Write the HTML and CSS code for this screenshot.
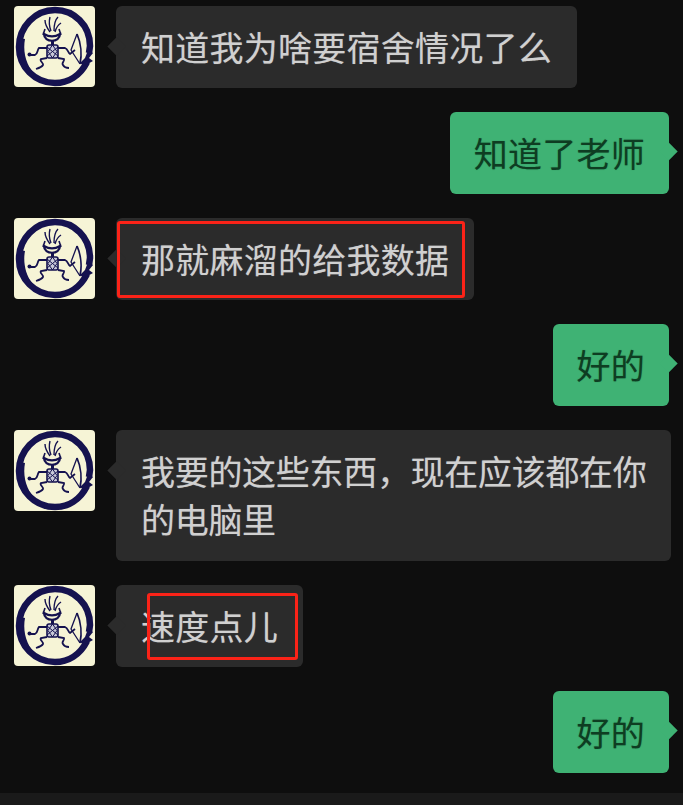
FILE: index.html
```html
<!DOCTYPE html>
<html lang="zh-CN">
<head>
    <meta charset="UTF-8">
    <meta name="viewport" content="width=device-width, initial-scale=1.0">
    <title>聊天记录</title>
    <link rel="stylesheet" href="styles.css">
</head>
<body>
    <svg class="defs" width="0" height="0" aria-hidden="true">
        <symbol id="avatar-logo" viewBox="0 0 81 81">
            <rect width="81" height="81" rx="4" fill="#f6f4d6"/>
            <!-- ring -->
            <path d="M73 56 C66 70 54 77 41 77 C21 77 5 61 5 41 C5 21 21 4 41 4 C60 4 76 19 76 40 L75 47" fill="none" stroke="#15124f" stroke-width="6.500"/>
            <path d="M6 32 C2 44 5 58 14 68 L18 65 C11 56 9 43 11 33 Z" fill="#15124f"/>
            <path d="M74 44 L79 47 L75 52 L79 55 L70 60 L66 57 L71 52 Z" fill="#15124f"/>
            <!-- feathers -->
            <path d="M36 26 C33 22 31 18 31 14 M37 25 C35 20 35 15 36 11 M40 25 C40 19 41 14 44 11 M41 26 C42 22 44 19 47 17" fill="none" stroke="#15124f" stroke-width="1.400"/>
            <!-- head -->
            <path d="M30 28 C30 37 46 37 46 28 C41 31 35 31 30 28 Z" fill="#f6f4d6" stroke="#15124f" stroke-width="2.200"/>
            <path d="M31 23 L29 29 M45 23 L47 29" stroke="#15124f" stroke-width="1.600"/>
            <rect x="37" y="35" width="3" height="5" fill="#15124f"/>
            <!-- body -->
            <rect x="33" y="39" width="11" height="13" rx="2" fill="#c8c9d8" stroke="#15124f" stroke-width="1.600"/>
            <path d="M33 41 L44 50 M44 41 L33 50 M38.500 39 L34 45.500 L38.500 52 L43 45.500 Z" fill="none" stroke="#15124f" stroke-width="1"/>
            <!-- arms -->
            <path d="M33 42 L25 42 C23 44 24 48 21 49 L15 49" fill="none" stroke="#15124f" stroke-width="1.800"/>
            <circle cx="15.500" cy="48.500" r="2" fill="#15124f"/>
            <path d="M44 42 L51 42 C54 43 54 47 56 48 L61 44" fill="none" stroke="#15124f" stroke-width="1.800"/>
            <!-- legs -->
            <path d="M33 52 L27 53 C25 55 30 57 29 59 C28 61 25 62 22 63" fill="none" stroke="#15124f" stroke-width="1.800"/>
            <path d="M44 52 L50 53 C51 55 47 57 49 59 C50 61 52 62 55 62" fill="none" stroke="#15124f" stroke-width="1.800"/>
            <!-- bow -->
            <path d="M63 28 L57 44 L66 58" fill="none" stroke="#15124f" stroke-width="1.300"/>
            <path d="M63 28 C67 37 68 49 66 58" fill="none" stroke="#15124f" stroke-width="1.800"/>
        </symbol>
    </svg>

    <main class="chat">
        <div class="row">
            <svg class="avatar"><use href="#avatar-logo"/></svg>
            <div class="bubble">知道我为啥要宿舍情况了么</div>
        </div>
        <div class="row me">
            <div class="bubble">知道了老师</div>
        </div>
        <div class="row">
            <svg class="avatar"><use href="#avatar-logo"/></svg>
            <div class="bubble">那就麻溜的给我数据<span class="mark mark-full"></span></div>
        </div>
        <div class="row me">
            <div class="bubble">好的</div>
        </div>
        <div class="row">
            <svg class="avatar"><use href="#avatar-logo"/></svg>
            <div class="bubble long">我要的这些东西，现在应该都在你的电脑里</div>
        </div>
        <div class="row">
            <svg class="avatar"><use href="#avatar-logo"/></svg>
            <div class="bubble">速度点儿<span class="mark mark-part"></span></div>
        </div>
        <div class="row me">
            <div class="bubble">好的</div>
        </div>
    </main>
    <div class="bottom-bar"></div>
</body>
</html>
```

FILE: styles.css
```css
/* Global Styles */
html, body {
    height: 100%;
}

body {
    margin: 0;
    background-color: #0e0e0e;
    font-family: "Noto Sans CJK SC", "Liberation Sans", sans-serif;
    display: flex;
    flex-direction: column;
    overflow: hidden;
}

.defs {
    position: absolute;
}

.chat {
    flex: 1;
    display: flex;
    flex-direction: column;
    gap: 24px;
    padding: 6px 14px 0;
}

.row {
    display: flex;
    align-items: flex-start;
    gap: 21px;
}

    .row.me {
        justify-content: flex-end;
    }

.avatar {
    width: 81px;
    height: 81px;
    flex-shrink: 0;
}

.bubble {
    position: relative;
    background-color: #2b2b2b;
    color: #d0d0d0;
    font-size: 34px;
    letter-spacing: 0.25px;
    line-height: 48px;
    padding: 17px 25px;
    border-radius: 6px;
    text-shadow: 0 0 1px rgba(208, 208, 208, 0.45);
}

    .bubble::before {
        content: "";
        position: absolute;
        top: 34px;
        left: -6px;
        width: 13px;
        height: 13px;
        background-color: inherit;
        transform: rotate(45deg);
    }

    .bubble.long {
        flex-shrink: 0;
        width: 506px;
        letter-spacing: -0.3px;
        padding-right: 24px;
        padding-bottom: 18px;
    }

.me .bubble {
    background-color: #3fb274;
    color: #0e3d22;
    padding: 17px 24px;
    text-shadow: 0 0 1px rgba(14, 61, 34, 0.45);
}

    .me .bubble::before {
        top: 33px;
        left: auto;
        right: -6px;
    }

/* red highlight boxes drawn over the screenshot */
.mark {
    position: absolute;
    border: 3px solid #fb2318;
    border-radius: 3px;
}

.mark-full {
    top: 3px;
    left: 1px;
    right: 9px;
    bottom: 2px;
}

.mark-part {
    top: 8px;
    left: 31px;
    right: 5px;
    bottom: 7px;
}

.bottom-bar {
    height: 12px;
    background-color: #1a1a1a;
}
```
